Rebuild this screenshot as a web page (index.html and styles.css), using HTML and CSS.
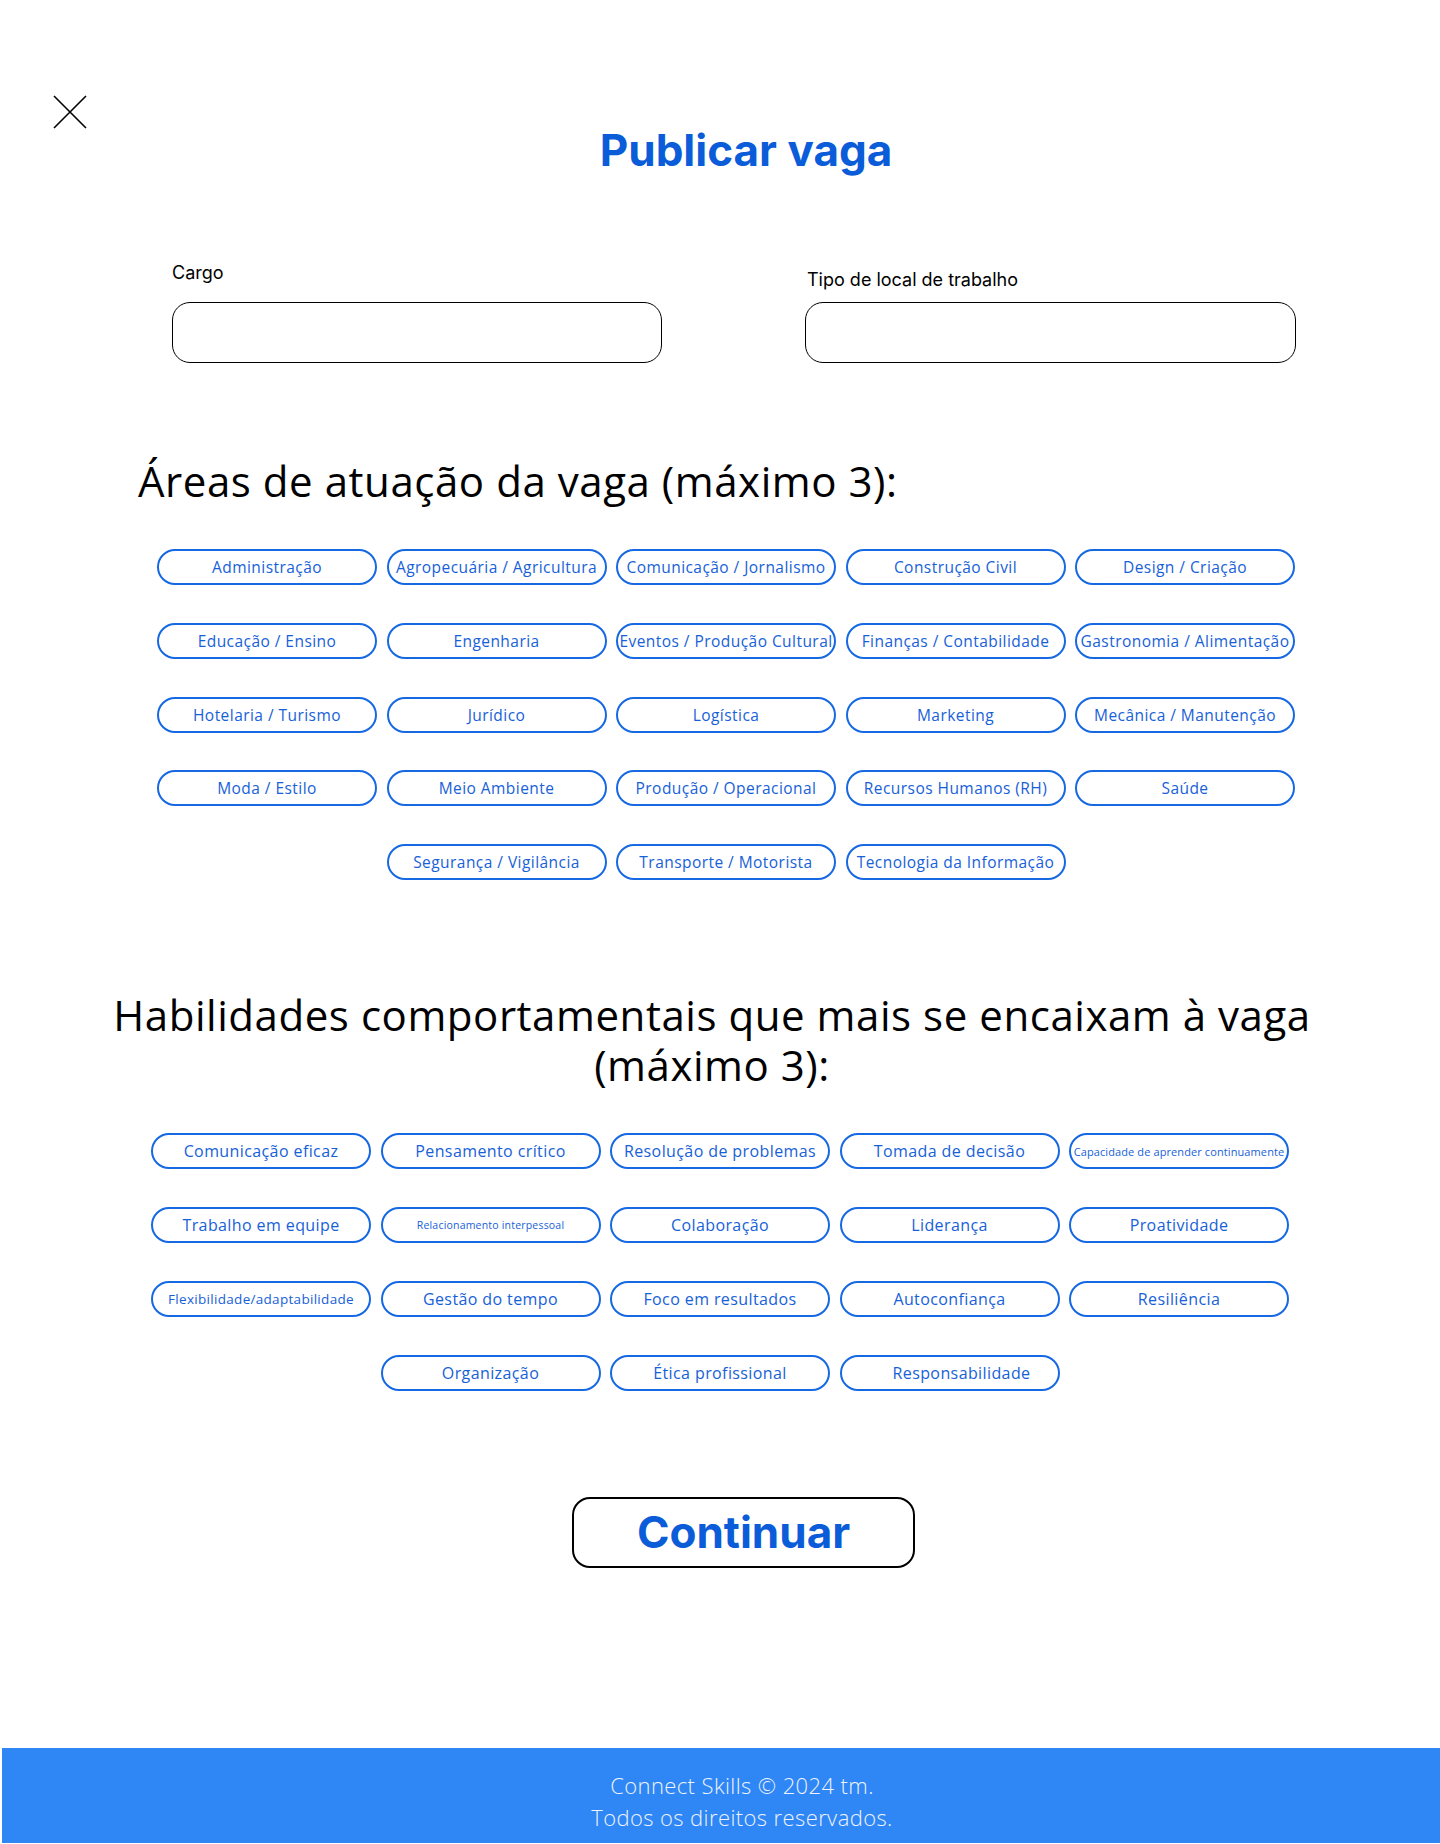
FILE: index.html
```html
<!DOCTYPE html>
<html lang="pt-BR">
<head>
<meta charset="utf-8">
<title>Publicar vaga</title>
<link rel="stylesheet" href="styles.css">
</head>
<body>
<main class="page">
  <button class="close" type="button" aria-label="Fechar">
    <svg viewBox="0 0 34 34" width="34" height="34"><path d="M1 1 L33 33 M33 1 L1 33" stroke="#000" stroke-width="1.6" fill="none"/></svg>
  </button>
  <h1 class="title">Publicar vaga</h1>

  <section class="fields">
    <div class="field">
      <label class="label label--cargo" for="cargo">Cargo</label>
      <input class="input" id="cargo" type="text">
    </div>
    <div class="field">
      <label class="label label--tipo" for="tipo">Tipo de local de trabalho</label>
      <input class="input" id="tipo" type="text">
    </div>
  </section>

  <h2 class="heading heading--areas">Áreas de atuação da vaga (máximo 3):</h2>
  <div class="chips chips--areas">
    <button class="chip" type="button">Administração</button>
    <button class="chip" type="button">Agropecuária / Agricultura</button>
    <button class="chip" type="button">Comunicação / Jornalismo</button>
    <button class="chip" type="button">Construção Civil</button>
    <button class="chip" type="button">Design / Criação</button>
    <button class="chip" type="button">Educação / Ensino</button>
    <button class="chip" type="button">Engenharia</button>
    <button class="chip" type="button">Eventos / Produção Cultural</button>
    <button class="chip" type="button">Finanças / Contabilidade</button>
    <button class="chip" type="button">Gastronomia / Alimentação</button>
    <button class="chip" type="button">Hotelaria / Turismo</button>
    <button class="chip" type="button">Jurídico</button>
    <button class="chip" type="button">Logística</button>
    <button class="chip" type="button">Marketing</button>
    <button class="chip" type="button">Mecânica / Manutenção</button>
    <button class="chip" type="button">Moda / Estilo</button>
    <button class="chip" type="button">Meio Ambiente</button>
    <button class="chip" type="button">Produção / Operacional</button>
    <button class="chip" type="button">Recursos Humanos (RH)</button>
    <button class="chip" type="button">Saúde</button>
    <button class="chip" type="button">Segurança / Vigilância</button>
    <button class="chip" type="button">Transporte / Motorista</button>
    <button class="chip" type="button">Tecnologia da Informação</button>
  </div>

  <h2 class="heading heading--skills">Habilidades comportamentais que mais se encaixam à vaga<br>(máximo 3):</h2>
  <div class="chips chips--skills">
    <button class="chip chip--lg" type="button">Comunicação eficaz</button>
    <button class="chip chip--lg" type="button">Pensamento crítico</button>
    <button class="chip chip--lg" type="button">Resolução de problemas</button>
    <button class="chip chip--lg" type="button">Tomada de decisão</button>
    <button class="chip chip--xs" type="button">Capacidade de aprender continuamente</button>
    <button class="chip chip--lg" type="button">Trabalho em equipe</button>
    <button class="chip chip--xxs" type="button">Relacionamento interpessoal</button>
    <button class="chip chip--lg" type="button">Colaboração</button>
    <button class="chip chip--lg" type="button">Liderança</button>
    <button class="chip chip--lg" type="button">Proatividade</button>
    <button class="chip chip--sm" type="button">Flexibilidade/adaptabilidade</button>
    <button class="chip chip--lg" type="button">Gestão do tempo</button>
    <button class="chip chip--lg" type="button">Foco em resultados</button>
    <button class="chip chip--lg" type="button">Autoconfiança</button>
    <button class="chip chip--lg" type="button">Resiliência</button>
    <button class="chip chip--lg" type="button">Organização</button>
    <button class="chip chip--lg" type="button">Ética profissional</button>
    <button class="chip chip--lg chip--offset" type="button">Responsabilidade</button>
  </div>

  <div class="actions">
    <button class="continue" type="button">Continuar</button>
  </div>
</main>

<footer class="footer">
  <p>Connect Skills © 2024 tm.</p>
  <p>Todos os direitos reservados.</p>
</footer>
</body>
</html>
```

FILE: styles.css
```css
* {
  box-sizing: border-box;
}

body {
  margin: 0;
  background: #ffffff;
  color: #000000;
  font-family: Inter, "Noto Sans", sans-serif;
}

.page {
  position: relative;
  padding-top: 124px;
}

.close {
  position: absolute;
  left: 53px;
  top: 95px;
  width: 34px;
  height: 34px;
  padding: 0;
  border: 0;
  background: none;
}

.close svg {
  display: block;
}

.title {
  margin: 0;
  padding-left: 52px;
  text-align: center;
  font-family: Inter, sans-serif;
  font-weight: 700;
  font-size: 44px;
  line-height: 52px;
  color: #0b5cd8;
}

.fields {
  display: grid;
  grid-template-columns: 490px 491px;
  column-gap: 143px;
  align-items: end;
  margin: 87px 0 0 172px;
}

.field {
  display: flex;
  flex-direction: column;
}

.label {
  font-family: Inter, sans-serif;
  font-size: 18px;
  line-height: 20px;
  color: #000;
}

.label--cargo {
  margin-bottom: 19px;
}

.label--tipo {
  margin-bottom: 12px;
  padding-left: 2px;
}

.input {
  display: block;
  width: 100%;
  height: 61px;
  border: 1px solid #000;
  border-radius: 18px;
  background: #fff;
  padding: 0 18px;
  font: 16px Inter, sans-serif;
}

.heading {
  margin: 0;
  font-family: "Open Sans", sans-serif;
  font-weight: 400;
  font-size: 42px;
  letter-spacing: 0.55px;
  color: #000;
}

.heading--areas {
  margin: 94px 0 0 138px;
  line-height: 48px;
}

.heading--skills {
  margin: 110px 96px 0 80px;
  line-height: 50px;
  text-align: center;
}

.chips {
  display: flex;
  flex-wrap: wrap;
  justify-content: center;
  gap: 37.8px 9.5px;
  width: 1138px;
}

.chips--areas {
  margin: 44px 0 0 157px;
}

.chips--skills {
  margin: 43px 0 0 151px;
}

.chip {
  display: flex;
  align-items: center;
  justify-content: center;
  width: 220px;
  height: 36px;
  padding: 0 2px;
  border: 2px solid #1668e3;
  border-radius: 18px;
  background: #fff;
  color: #1761d8;
  font-family: "Open Sans", sans-serif;
  font-size: 15.5px;
  letter-spacing: 0.45px;
  white-space: nowrap;
}

.chip--lg {
  font-size: 16px;
  letter-spacing: 0.4px;
}

.chip--sm {
  font-size: 13.5px;
  letter-spacing: 0.3px;
}

.chip--xs {
  font-size: 11px;
  letter-spacing: 0.1px;
}

.chip--xxs {
  font-size: 10.5px;
  letter-spacing: 0.2px;
}

.chip--offset {
  padding-left: 26px;
}

.actions {
  margin-top: 106px;
  padding-left: 572px;
}

.continue {
  width: 343px;
  height: 71px;
  border: 2px solid #000;
  border-radius: 18px;
  background: #fff;
  color: #0b5cd8;
  font-family: Inter, sans-serif;
  font-weight: 700;
  font-size: 44px;
  line-height: 1;
  padding: 0;
}

.footer {
  margin: 180px 0 0 2px;
  padding: 21px 0 10px 42px;
  background: #2f86f5;
  color: #eef3fd;
  text-align: center;
  font-family: "Open Sans", sans-serif;
  font-weight: 300;
  font-size: 22px;
  letter-spacing: 0.4px;
  line-height: 32px;
}

.footer p {
  margin: 0;
}
```
